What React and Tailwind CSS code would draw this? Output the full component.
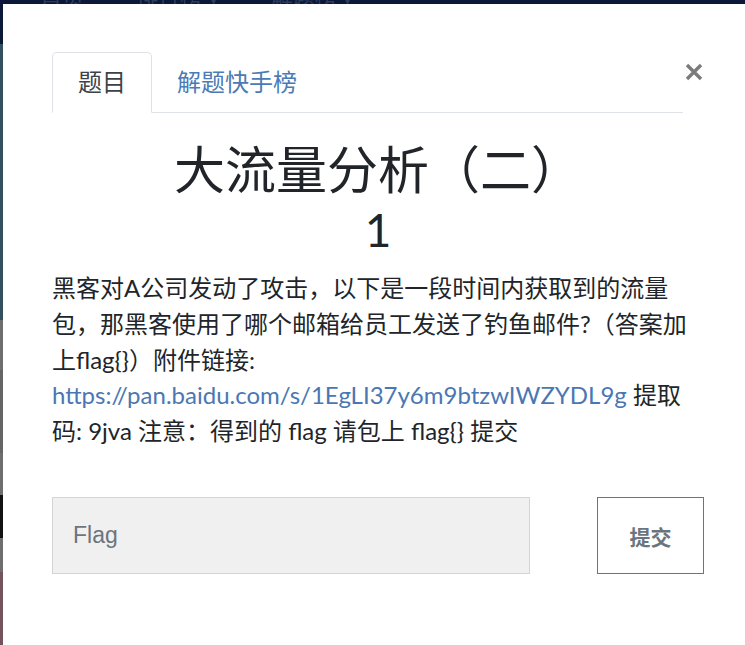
import React from "react";

const Strip = () => {
  return (
    <div className="absolute inset-0 flex flex-col">
      <div className="h-[44px] bg-[#0b1838] flex items-end gap-[52px] pl-[40px] text-[#2f3c5a] text-[22px] leading-none overflow-hidden font-['Lato','Noto_Sans_CJK_SC',sans-serif]">
        <span className="translate-y-[-36px]">首页</span>
        <span className="translate-y-[-36px]">排行榜 ▾</span>
        <span className="translate-y-[-36px]">解题榜 ▾</span>
      </div>
      <div className="h-[276px] bg-[#33505e]" />
      <div className="h-[50px] bg-[#6e6e6e]" />
      <div className="h-[83px] bg-[#656565]" />
      <div className="h-[42px] bg-[#6e6e6e]" />
      <div className="h-[43px] bg-[#121212]" />
      <div className="h-[34px] bg-[#6e6e6e]" />
      <div className="flex-1 bg-[#74535c]" />
    </div>
  );
};

const App = () => {
  return (
    <div className="relative h-screen w-full overflow-hidden font-['Lato','Noto_Sans_CJK_SC',sans-serif] text-[#212529]">
      <Strip />
      <div className="absolute left-[3px] top-[4px] w-[800px] h-[700px] bg-white pl-[49px] pt-[48px]">
        <div className="w-[652px] relative">
          <div className="flex w-[631px] border-b border-[#dee2e6]">
            <div className="-mb-px px-[25px] pt-[11px] pb-[12px] border border-[#dee2e6] border-b-white rounded-t-[5px] text-[24px] leading-[36px] text-[#3d4248] bg-white">
              题目
            </div>
            <div className="px-[25px] pt-[12px] pb-[12px] text-[24px] leading-[36px] text-[#4b7bb5]">
              解题快手榜
            </div>
          </div>
          <svg className="absolute left-[633px] top-[11px]" width="18" height="18" viewBox="0 0 18 18">
            <path d="M2 2 L16 16 M16 2 L2 16" stroke="#7b7b7b" strokeWidth="3.4" strokeLinecap="butt" />
          </svg>

          <h1 className="mt-[24px] text-center text-[51px] leading-[61px] font-['Noto_Sans_CJK_SC',sans-serif] font-normal">
            大流量分析（二）
          </h1>
          <div className="text-center text-[46px] leading-[56px] mt-[4px]">1</div>

          <p className="w-[637px] mt-[12px] text-[24px] leading-[35.75px]">
            黑客对A公司发动了攻击，以下是一段时间内获取到的流量包，那黑客使用了哪个邮箱给员工发送了钓鱼邮件?（答案加上flag{"{}"}）附件链接:{" "}
            <a className="text-[#4a77b4]">https://pan.baidu.com/s/1EgLI37y6m9btzwIWZYDL9g</a> 提取码: 9jva 注意：得到的 flag 请包上 flag{"{}"} 提交
          </p>

          <div className="flex items-start mt-[48px]">
            <div className="w-[478px] h-[77px] bg-[#f0f0f0] border border-[#d4d4d4] flex items-center pl-[20px] text-[23px] text-[#6c757d] font-['Liberation_Sans',sans-serif]">
              Flag
            </div>
            <button className="ml-[67px] w-[107px] h-[77px] border border-[#6c757d] bg-white text-[21px] font-bold text-[#6c757d] font-['Noto_Sans_CJK_SC',sans-serif] pt-[3px]">
              提交
            </button>
          </div>
        </div>
      </div>
    </div>
  );
};

export default App;
